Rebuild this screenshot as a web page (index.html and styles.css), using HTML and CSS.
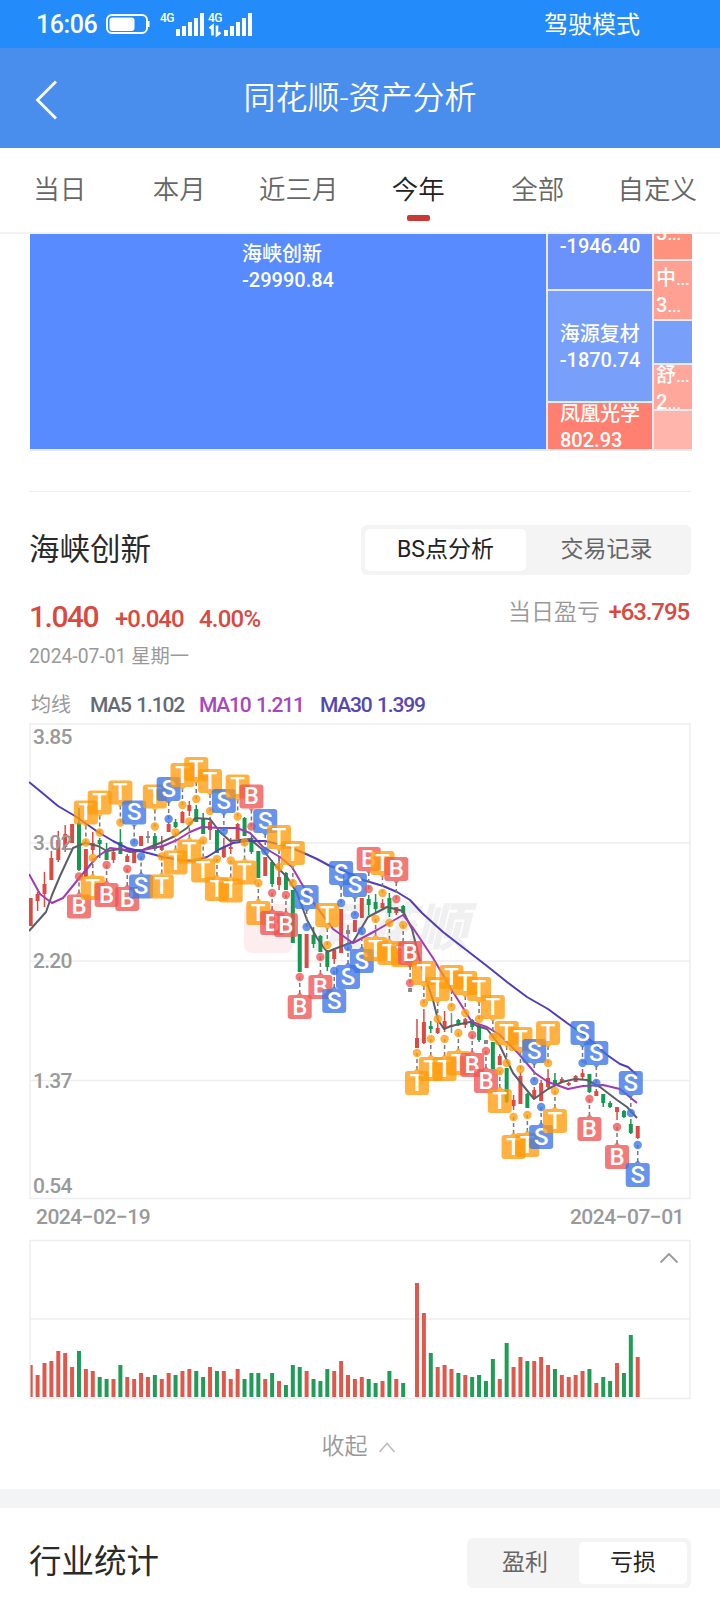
FILE: index.html
```html
<!DOCTYPE html>
<html lang="zh-CN">
<head>
    <meta charset="UTF-8">
    <meta name="viewport" content="width=device-width, initial-scale=1.0">
    <title>同花顺-资产分析</title>
    <link rel="stylesheet" href="styles.css">
</head>
<body>

    <div class="status-bar">
        <span class="time">16:06</span>
        <svg class="status-icons" width="150" height="30" viewBox="0 0 150 30">
            <rect x="1" y="6" width="40" height="18" rx="5" fill="none" stroke="#fff" stroke-width="2"/>
            <rect x="3.500" y="8.500" width="25" height="13.500" rx="3" fill="#fff"/>
            <path d="M42.500 12v6" stroke="#fff" stroke-width="2"/>
            <g fill="#fff">
                <text x="54" y="12.500" class="net">4G</text>
                <path d="M70 20h4v7h-4zM76 17h4v10h-4zM82 13h4v14h-4zM88 9h4v18h-4zM94 4h4v23h-4z"/>
                <text x="102" y="12.500" class="net">4G</text>
                <path d="M118 21h4v6h-4zM124 17h4v10h-4zM130 13h4v14h-4zM136 9h4v18h-4zM142 4h4v23h-4z"/>
            </g>
            <path d="M103.500 19.500l3-2.500v9.500M111 16.500v9.500l3.500-2.500" fill="none" stroke="#fff" stroke-width="2.600"/>
        </svg>
        <span class="mode">驾驶模式</span>
    </div>

    <header>
        <svg class="back" width="24" height="40" viewBox="0 0 24 40">
            <path d="M22 1.500L3.500 20 22 38.500" fill="none" stroke="#fff" stroke-width="2.800"/>
        </svg>
        <h1>同花顺-资产分析</h1>
    </header>

    <nav class="tabs">
        <a>当日</a>
        <a>本月</a>
        <a>近三月</a>
        <a class="active">今年</a>
        <a>全部</a>
        <a>自定义</a>
    </nav>

    <div class="treemap">
        <div class="col">
            <div class="cell main"><span>海峡创新<br>-29990.84</span></div>
        </div>
        <div class="col">
            <div class="cell c1"><span>-1946.40</span></div>
            <div class="cell c2"><span>海源复材<br>-1870.74</span></div>
            <div class="cell c3"><span>凤凰光学<br>802.93</span></div>
        </div>
        <div class="col">
            <div class="cell d1"><span>3<i>...</i></span></div>
            <div class="cell d2"><span>中<i>...</i><br>3<i>...</i></span></div>
            <div class="cell d3"></div>
            <div class="cell d4"><span>舒<i>...</i><br>2<i>...</i></span></div>
            <div class="cell d5"></div>
        </div>
    </div>

    <section class="stock">
        <div class="stock-head">
            <h2>海峡创新</h2>
            <div class="toggle">
                <span class="on">BS点分析</span>
                <span>交易记录</span>
            </div>
        </div>
        <div class="quote">
            <span class="price">1.040</span>
            <span class="change">+0.040</span>
            <span class="percent">4.00%</span>
            <span class="today">当日盈亏 <b>+63.795</b></span>
        </div>
        <div class="date">2024-07-01 <span>星期一</span></div>
        <div class="legend">
            <span class="name">均线</span>
            <span class="ma5">MA5 1.102</span>
            <span class="ma10">MA10 1.211</span>
            <span class="ma30">MA30 1.399</span>
        </div>
        <svg id="kline" width="663" height="477" viewBox="29 723 663 477"></svg>
        <div class="range">
            <span>2024−02−19</span>
            <span>2024−07−01</span>
        </div>
        <svg id="volume" width="663" height="161" viewBox="29 1239 663 161"></svg>
        <div class="fold">
            收起
            <svg width="18" height="12" viewBox="0 0 18 12">
                <path d="M1.500 11L9 2.500l7.500 8.500" fill="none" stroke="#bbb" stroke-width="1.500"/>
            </svg>
        </div>
    </section>

    <section class="industry">
        <h2>行业统计</h2>
        <div class="toggle small">
            <span>盈利</span>
            <span class="on">亏损</span>
        </div>
    </section>

    <script src="chart.js"></script>
</body>
</html>
```

FILE: styles.css
```css
body {
    font-family: Roboto, "Noto Sans CJK SC", sans-serif;
    margin: 0;
    padding: 0;
    height: 1600px;
    overflow: hidden;
    background-color: #fff;
    color: #2a2a2a;
}

h1,
h2 {
    margin: 0;
    font-weight: 400;
}

.status-bar {
    display: flex;
    align-items: center;
    height: 48px;
    padding: 0 80px 0 36px;
    background-color: #248bfb;
    color: #fff;
}

.time {
    width: 70px;
    font-size: 25px;
    font-weight: 500;
    letter-spacing: -0.4px;
}

.status-icons {
    margin-top: -1px;
}

.net {
    font-size: 12px;
    font-weight: 500;
    letter-spacing: -0.5px;
}

.mode {
    margin-left: auto;
    padding-bottom: 3px;
    font-size: 24px;
    font-weight: 400;
}

header {
    display: flex;
    align-items: center;
    height: 100px;
    padding-left: 34px;
    background-color: #4a8eed;
    color: #fff;
}

.back {
    margin-top: 4px;
}

header h1 {
    flex: 1;
    margin-right: 58px;
    padding-bottom: 6px;
    font-size: 32px;
    font-weight: 350;
    text-align: center;
}

.tabs {
    display: grid;
    grid-template-columns: repeat(6, 119.5px);
    height: 84px;
    border-bottom: 2px solid #f2f2f2;
}

.tabs a {
    display: flex;
    flex-direction: column;
    align-items: center;
    padding-top: 23px;
    font-size: 26.5px;
    line-height: 38px;
    font-weight: 350;
    color: #666;
}

.tabs .active {
    color: #222;
}

.tabs .active::after {
    content: "";
    width: 23px;
    height: 6px;
    margin-top: 6px;
    border-radius: 2px;
    background-color: #c93a35;
}

.treemap {
    display: grid;
    grid-template-columns: 516px 104px 38px;
    gap: 2px;
    width: 662px;
    height: 215px;
    margin-left: 30px;
    padding-bottom: 2px;
    background-color: #e9e9f2;
}

.col {
    display: flex;
    flex-direction: column;
    gap: 2px;
    min-width: 0;
}

.cell {
    display: flex;
    align-items: center;
    justify-content: center;
    overflow: hidden;
    color: #fff;
    font-size: 20px;
    font-weight: 500;
    line-height: 26px;
    white-space: nowrap;
}

.cell i {
    font-style: normal;
    font-size: 17px;
    letter-spacing: -0.2px;
}

.main {
    height: 215px;
    align-items: flex-start;
    background-color: #578bff;
}

.main span {
    margin-top: 7px;
}

.c1 {
    height: 55px;
    align-items: flex-start;
    background-color: #6a92fa;
}

.c1 span {
    margin-top: -1px;
}

.c2 {
    height: 110px;
    background-color: #789ffa;
}

.c2 span {
    margin-top: 2px;
}

.c3 {
    height: 46px;
    justify-content: flex-start;
    padding-left: 12px;
    box-sizing: border-box;
    background-color: #ff8070;
}

.c3 span {
    margin-top: 1px;
}

.d1,
.d2,
.d4 {
    justify-content: flex-start;
    padding-left: 2px;
}

.d1 {
    height: 25px;
    background-color: #ff917f;
}

.d1 span {
    margin-top: -27px;
}

.d2 {
    height: 58px;
    background-color: #ffa092;
}

.d2 span,
.d4 span {
    margin-top: 3px;
}

.d3 {
    height: 42px;
    background-color: #789ffa;
}

.d4 {
    height: 44px;
    background-color: #ffa79b;
}

.d5 {
    height: 38px;
    background-color: #ffb5ab;
}

.stock {
    display: flex;
    flex-direction: column;
    height: 997px;
    margin: 40px 29px 0;
    border-top: 1px solid #eee;
}

.stock-head {
    display: flex;
    align-items: center;
    justify-content: space-between;
    height: 50px;
    margin-top: 33px;
}

.stock h2 {
    font-size: 30.5px;
    line-height: 40px;
}

.toggle {
    display: flex;
    box-sizing: border-box;
    width: 330px;
    height: 50px;
    padding: 4px;
    border-radius: 6px;
    background-color: #f4f4f4;
}

.toggle span {
    flex: 1;
    border-radius: 5px;
    font-size: 23px;
    line-height: 42px;
    text-align: center;
    color: #666;
}

.toggle .on {
    background-color: #fff;
    color: #222;
}

.quote {
    display: flex;
    align-items: baseline;
    height: 55px;
    padding-top: 22px;
    box-sizing: border-box;
    color: #d9493f;
    font-size: 24px;
    font-weight: 500;
    line-height: 40px;
    letter-spacing: -1px;
}

.price {
    width: 86px;
    font-size: 30px;
    letter-spacing: -1.5px;
}

.change {
    width: 84px;
}

.percent {
    letter-spacing: -0.8px;
}

.today {
    position: relative;
    top: -7px;
    margin-left: auto;
    margin-right: 2px;
    color: #999;
    font-size: 23px;
    font-weight: 350;
    letter-spacing: 0;
}

.today b {
    margin-left: 3px;
    color: #d9493f;
    font-size: 24px;
    font-weight: 500;
    letter-spacing: -1.1px;
}

.date {
    height: 30px;
    margin-top: 11px;
    font-size: 19.3px;
    line-height: 31px;
    color: #999;
}

.legend {
    display: flex;
    height: 34px;
    margin-top: 17px;
    padding-left: 2px;
    font-size: 21px;
    font-weight: 500;
    line-height: 34px;
    letter-spacing: -1.2px;
    word-spacing: 1.5px;
}

.legend .name {
    width: 59px;
    font-size: 20px;
    font-weight: 400;
    letter-spacing: 0;
    color: #999;
}

.ma5 {
    width: 109px;
    color: #666a75;
}

.ma10 {
    width: 121px;
    color: #a846bd;
}

.ma30 {
    color: #5646b4;
}

#kline,
#volume {
    display: block;
    flex: none;
}

#kline {
    margin-top: 1px;
}

.grid {
    fill: none;
    stroke: #eee;
    stroke-width: 1.5;
}

.axis {
    font-size: 21px;
    font-weight: 500;
    letter-spacing: -0.7px;
    fill: #999;
}

.brand {
    font-size: 52px;
    font-weight: 900;
    font-style: italic;
    fill: #f0f0f0;
}

.badge {
    font-size: 24px;
    font-weight: 500;
    text-anchor: middle;
    fill: #fff;
}

.range {
    display: flex;
    justify-content: space-between;
    height: 39px;
    padding: 0 7px;
    font-size: 21px;
    font-weight: 500;
    letter-spacing: -0.5px;
    line-height: 35px;
    color: #999;
}

.fold {
    display: flex;
    align-items: center;
    justify-content: center;
    gap: 10px;
    margin-top: 30px;
    padding-right: 3px;
    font-size: 23px;
    line-height: 34px;
    color: #999;
    font-weight: 350;
}

.industry {
    display: flex;
    justify-content: space-between;
    padding: 30px 29px 0;
    border-top: 19px solid #f2f4f6;
}

.industry h2 {
    font-size: 32.5px;
    line-height: 49px;
}

.industry .small {
    width: 224px;
}
```

FILE: chart.js
```js
const RED = '#dc4a42';
const GREEN = '#129b50';
const GREY = '#888';
const STEP = 6.898;
const x = i => 30.7 + STEP * i;

// colour, high, open/close top, open/close bottom, low
const candles = [
    'r 898 898 926 926', 'r 892 894 901 911', 'r 872 884 894 907', 'r 851 858 880 880', 'r 831 840 860 862',
    'r 825 834 847 852', 'r 824 824 843 843', 'g 808 823 870 871', 'r 849 849 877 877', 'r 832 843 850 854',
    'g 838 840 844 858', 'g 843 850 860 860', 'r 849 852 860 863', 'g 829 842 854 854', 'r 854 856 862 862',
    'r 851 851 863 863', 'r 836 836 846 846', 'k 831 836 838 843', 'g 833 836 849 851', 'r 836 846 850 851',
    'r 822 824 832 832', 'g 819 822 827 828', 'r 811 812 823 823', 'r 801 805 811 816', 'g 805 809 822 822',
    'g 813 818 834 834', 'r 817 822 830 840', 'g 830 830 853 853', 'r 838 847 857 858', 'r 838 847 849 854',
    'r 823 824 839 839', 'g 817 818 836 836', 'g 836 838 852 854', 'g 851 851 878 878', 'r 857 857 876 876',
    'g 860 862 884 887', 'r 857 877 885 890', 'g 872 873 890 890', 'g 890 890 943 943', 'g 934 934 972 972',
    'r 934 934 968 968', 'g 927 935 944 948', 'g 935 936 952 952', 'g 950 952 967 971', 'r 948 950 959 964',
    'r 909 909 953 953', 'k 925 930 934 943', 'r 920 920 932 932', 'r 898 898 918 918', 'g 895 899 905 915',
    'g 894 902 909 912', 'r 899 903 908 909', 'g 893 898 913 917', 'r 907 907 913 915', 'g 905 906 913 915',
    'k 988 988 992 992', 'r 1019 1038 1048 1048', 'r 1009 1022 1043 1044', 'g 1021 1026 1029 1033', 'r 1022 1028 1033 1034',
    'r 1011 1021 1028 1032', 'k 1013 1025 1027 1033', 'g 1019 1020 1025 1026', 'r 1018 1019 1025 1028', 'g 1019 1020 1027 1030',
    'g 1025 1026 1040 1042', 'k 1040 1040 1044 1044', 'g 1042 1042 1069 1069', 'r 1054 1056 1065 1065', 'g 1068 1068 1102 1103',
    'r 1095 1100 1106 1110', 'r 1072 1076 1104 1104', 'g 1093 1094 1108 1108', 'r 1087 1090 1097 1099', 'r 1080 1083 1101 1101',
    'r 1069 1078 1087 1088', 'g 1073 1080 1084 1085', 'r 1077 1079 1082 1083', 'r 1082 1083 1085 1086', 'r 1075 1076 1082 1082',
    'r 1069 1073 1077 1079', 'g 1074 1074 1092 1093', 'r 1089 1091 1096 1096', 'g 1094 1094 1103 1107', 'g 1101 1103 1107 1108',
    'r 1107 1107 1112 1120', 'g 1110 1111 1117 1118', 'g 1119 1124 1133 1134', 'r 1126 1126 1138 1139'
];

// day, type, centre of the badge, side of the candle (1 = above it, -1 = below it)
const trades = [
    [7, 'B', 906.5, -1], [8, 'T', 812.5, 1], [9, 'T', 888, -1], [10, 'T', 802.5, 1], [11, 'B', 895, -1],
    [13, 'T', 792.5, 1], [14, 'B', 899, -1], [15, 'S', 812.5, 1], [16, 'S', 886.5, -1], [18, 'T', 796.5, 1],
    [19, 'T', 886.5, -1], [20, 'S', 789, 1], [21, 'T', 862.5, -1], [22, 'T', 775, 1], [23, 'T', 851.5, -1],
    [24, 'T', 769, 1], [25, 'T', 870.5, -1], [26, 'T', 781, 1], [27, 'T', 889, -1], [28, 'S', 801, 1],
    [29, 'T', 890.5, -1], [30, 'T', 786.5, 1], [31, 'T', 872.5, -1], [32, 'B', 796.5, 1], [33, 'T', 913, -1],
    [34, 'S', 821, 1], [35, 'B', 923, -1], [36, 'T', 837, 1], [37, 'B', 925, -1], [38, 'T', 853, 1],
    [39, 'B', 1007, -1], [40, 'S', 897, 1], [42, 'B', 987, -1], [43, 'T', 915, 1], [44, 'S', 1001, -1],
    [45, 'S', 873, 1], [46, 'S', 977, -1], [47, 'S', 885, 1], [48, 'S', 961, -1], [49, 'B', 859, 1],
    [50, 'T', 949, -1], [51, 'T', 863, 1], [52, 'T', 953, -1], [53, 'B', 869, 1], [54, 'T', 955, -1],
    [55, 'B', 953, 1], [56, 'T', 1083, -1], [57, 'T', 973, 1], [58, 'T', 1069, -1], [59, 'T', 989, 1],
    [60, 'T', 1069, -1], [61, 'T', 977, 1], [62, 'T', 1063, -1], [63, 'T', 983, 1], [64, 'B', 1065, -1],
    [65, 'T', 989, 1], [66, 'B', 1081, -1], [67, 'T', 1007, 1], [68, 'T', 1101, -1], [69, 'T', 1033, 1],
    [70, 'T', 1147, -1], [71, 'T', 1039, 1], [72, 'T', 1145, -1], [73, 'S', 1051, 1], [74, 'S', 1137, -1],
    [75, 'T', 1033, 1], [76, 'T', 1121, -1], [80, 'S', 1033, 1], [81, 'B', 1129, -1], [82, 'S', 1053, 1],
    [85, 'B', 1157, -1], [87, 'S', 1083, 1], [88, 'S', 1175, -1]
];

const tradeColors = { B: '#ee5552', S: '#3c75e4', T: '#ff9b0c' };

const averages = [
    ['#5b5e66', '29,931 37,922 46,912 52,895 60,876 73,848 85,843 98,846 107,851 120,849 130,852 140,851 160,843 175,836 187,828 195,818 210,819 220,832 230,841 250,839 263,850 275,865 287,877 297,893 307,920 317,938 327,952 337,948 353,942 368,917 387,907 403,911 412,929 421,965 433,1000 438,1020 444,1029 451,1026 470,1022 477,1026 487,1029 500,1046 513,1073 534,1099 548,1089 562,1082 575,1079 587,1080 600,1087 617,1100 627,1107 637,1118'],
    ['#a03ab4', '29,874 40,894 52,903 63,898 80,877 97,857 110,848 127,850 143,850 163,846 177,840 190,832 202,827 220,828 237,828 250,833 263,847 280,857 292,867 310,898 333,929 353,943 377,930 403,915 413,928 433,958 453,992 472,1022 487,1027 500,1035 518,1053 535,1073 548,1082 568,1089 583,1086 603,1085 620,1089 637,1103'],
    ['#513dbb', '29,782 40,791 58,806 75,816 98,832 113,841 127,848 135,850 148,853 163,857 180,860 193,861 207,857 220,849 233,843 247,841 265,841 287,846 306,854 317,859 330,866 342,870 353,875 363,880 383,886 397,892 410,900 422,913 443,932 465,949 487,966 507,982 527,997 548,1009 567,1023 587,1037 607,1055 620,1064 628,1067 637,1075']
];

const volumes = ('r32 r22 r34 r36 r46 r44 r30 g46 r28 r26 g20 g18 r18 g32 r20 r18 r24 r20 g22 r18 r24 g22 r26 r28 g26 g20 r30 g26 r26 ' +
    'r18 r28 g18 g24 g24 r18 g24 r16 g12 g32 g30 r26 g18 g16 g28 r26 r36 r22 r18 r20 g18 g14 r16 g26 r18 g14 r0 r114 r84 g44 ' +
    'r30 r32 r28 g24 r22 g20 g22 g16 g38 r18 g54 r30 r40 g36 r36 r40 r32 g28 r22 r20 r22 r26 g28 r14 g20 g16 r34 g24 g62 r40').split(' ');

const colorOf = c => ({ r: RED, g: GREEN, k: GREY })[c];

function drawKline() {
    let out = '<path class="grid" d="M30 724H690V1198.500H30zM30 843H690M30 961H690M30 1080.500H690"/>';

    // brand mark behind the candles
    out += '<rect x="244" y="904" width="49" height="49" rx="8" fill="#fdedee"/>';
    out += '<text class="brand" x="312" y="946">同花顺</text>';

    candles.forEach((row, i) => {
        const [c, high, top, bottom, low] = row.split(' ');
        out += `<path d="M${x(i)} ${high}V${low}" stroke="${colorOf(c)}" stroke-width="1.5"/>`;
        out += `<path d="M${x(i)} ${top}V${bottom}" stroke="${colorOf(c)}" stroke-width="4"/>`;
    });

    [[3.85, 744], [3.02, 850], ['2.20', 968], [1.37, 1088], [0.54, 1193]].forEach(([label, y]) => {
        out += `<text class="axis" x="33" y="${y}">${label}</text>`;
    });

    averages.forEach(([color, points]) => {
        out += `<polyline points="${points}" fill="none" stroke="${color}" stroke-width="2" stroke-linejoin="round"/>`;
    });

    trades.forEach(([day, type, y, side]) => {
        const cx = x(day);
        const color = tradeColors[type];
        out += `<path d="M${cx} ${y + 13 * side}V${y + 30 * side}" stroke="#777" stroke-width="1.5" stroke-dasharray="4 3"/>`;
        out += `<circle cx="${cx}" cy="${y + 30 * side}" r="4.2" fill="${color}" fill-opacity=".78"/>`;
        out += `<rect x="${cx - 12}" y="${y - 12}" width="24" height="24" rx="3" fill="${color}" fill-opacity=".78"/>`;
        out += `<path d="M${cx - 3} ${y + 12 * side}h6l-3 ${3 * side}z" fill="${color}" fill-opacity=".78"/>`;
        out += `<text class="badge" x="${cx}" y="${y + 7.5}">${type}</text>`;
    });

    document.getElementById('kline').innerHTML = out;
}

function drawVolume() {
    let out = '<path class="grid" d="M30 1240.5H690V1398.5H30zM30 1319H690"/>';
    volumes.forEach((v, i) => {
        const h = Number(v.slice(1));
        const left = Math.max(x(i) - 2, 30.5);
        out += `<rect x="${left}" y="${1397 - h}" width="${x(i) + 2 - left}" height="${h}" fill="${v[0] === 'r' ? '#e0584c' : '#1f9d57'}"/>`;
    });
    out += '<path d="M660.500 1262.500l8.500-8.500 8.500 8.500" fill="none" stroke="#999" stroke-width="1.800"/>';
    document.getElementById('volume').innerHTML = out;
}

drawKline();
drawVolume();
```
